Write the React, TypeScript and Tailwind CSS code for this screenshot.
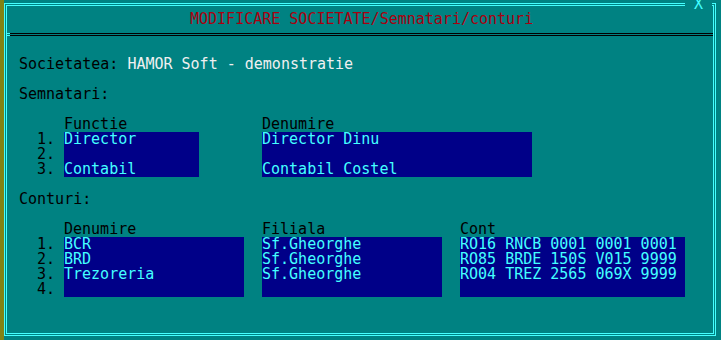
import React from 'react'

const semnatari = [
  { nr: '1.', functie: 'Director', denumire: 'Director Dinu' },
  { nr: '2.', functie: '', denumire: '' },
  { nr: '3.', functie: 'Contabil', denumire: 'Contabil Costel' },
]

const conturi = [
  { nr: '1.', denumire: 'BCR', filiala: 'Sf.Gheorghe', cont: 'RO16 RNCB 0001 0001 0001' },
  { nr: '2.', denumire: 'BRD', filiala: 'Sf.Gheorghe', cont: 'RO85 BRDE 150S V015 9999' },
  { nr: '3.', denumire: 'Trezoreria', filiala: 'Sf.Gheorghe', cont: 'RO04 TREZ 2565 069X 9999' },
  { nr: '4.', denumire: '', filiala: '', cont: '' },
]

const Row = ({ children, className = '' }: { children?: React.ReactNode; className?: string }) => (
  <div className={`h-[15px] whitespace-pre ${className}`}>{children}</div>
)

const Field = ({ text }: { text: string }) => (
  <div className="h-[15px] bg-[#000088] text-[#44ffff] whitespace-pre">{text}</div>
)

const Label = ({ text }: { text: string }) => (
  <div className="h-[15px] text-black whitespace-pre text-right pr-[9px]">{text}</div>
)

export default function App() {
  return (
    <div className="w-[721px] h-[340px] bg-[#008282] flex overflow-hidden font-['DejaVu_Sans_Mono',monospace] text-[15px] leading-[15px] text-black">
      <div className="w-[4px] h-full bg-[#828214]" />
      <div className="relative mt-[3px] w-[712px] h-[333px] border-[3px] border-double border-[#44ffff]">
        {/* close button sits over the top frame line */}
        <div className="absolute -top-[9px] left-[678px] w-[27px] h-[15px] bg-[#008282] text-[#44ffff] text-center">X</div>

        <div className="pt-[6px] pl-[3px]">
          <Row className="pl-[180px] text-[#a80010]">MODIFICARE SOCIETATE/Semnatari/conturi</Row>
          <div className="h-[15px] -ml-[3px] flex items-start">
            <div className="mt-[6px] w-[3px] h-[3px] border-y border-[#44ffff]" />
            <div className="mt-[6px] flex-1 h-[3px] border-y border-black" />
          </div>
          <Row />
          <Row className="pl-[9px]">
            Societatea: <span className="text-[#f0f0f0]">HAMOR Soft - demonstratie</span>
          </Row>
          <Row />
          <Row className="pl-[9px]">Semnatari:</Row>
          <Row />

          <div className="grid grid-cols-[54px_135px_63px_270px]">
            <div />
            <Row>Functie</Row>
            <div />
            <Row>Denumire</Row>
            {semnatari.map((s) => (
              <React.Fragment key={s.nr}>
                <Label text={s.nr} />
                <Field text={s.functie} />
                <div />
                <Field text={s.denumire} />
              </React.Fragment>
            ))}
          </div>

          <Row />
          <Row className="pl-[9px]">Conturi:</Row>
          <Row />

          <div className="grid grid-cols-[54px_180px_18px_180px_18px_225px]">
            <div />
            <Row>Denumire</Row>
            <div />
            <Row>Filiala</Row>
            <div />
            <Row>Cont</Row>
            {conturi.map((c) => (
              <React.Fragment key={c.nr}>
                <Label text={c.nr} />
                <Field text={c.denumire} />
                <div />
                <Field text={c.filiala} />
                <div />
                <Field text={c.cont} />
              </React.Fragment>
            ))}
          </div>
        </div>
      </div>
    </div>
  )
}
